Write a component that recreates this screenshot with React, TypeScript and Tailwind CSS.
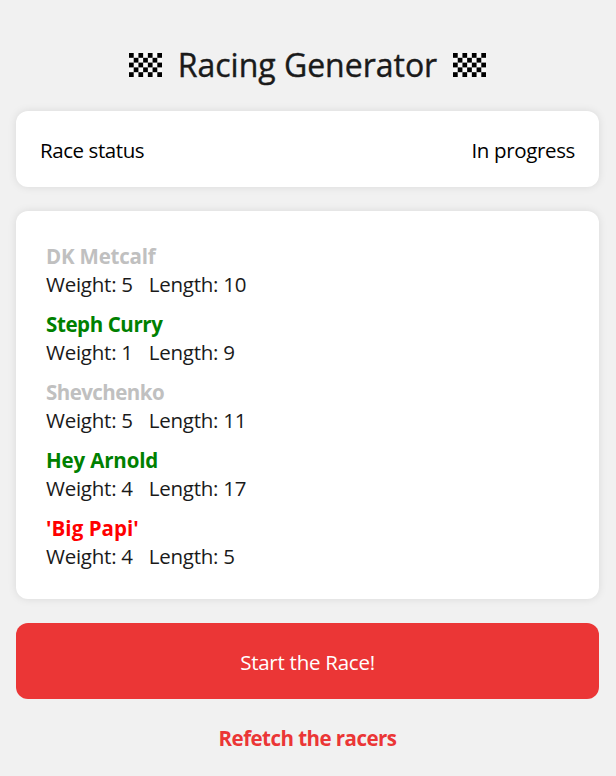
const racers = [
  { name: "DK Metcalf", weight: 5, length: 10, style: "text-[#c0c0c0] tracking-[-0.2px]" },
  { name: "Steph Curry", weight: 1, length: 9, style: "text-[#008000] tracking-[-0.4px]" },
  { name: "Shevchenko", weight: 5, length: 11, style: "text-[#c0c0c0] tracking-[-0.55px]" },
  { name: "Hey Arnold", weight: 4, length: 17, style: "text-[#008000] tracking-[-0.15px]" },
  { name: "'Big Papi'", weight: 4, length: 5, style: "text-[#ff0000] tracking-[0.05px]" },
];

function Flag() {
  return (
    <svg width="33" height="24" viewBox="0 0 33 24" className="block shrink-0" aria-hidden="true">
      <rect width="33" height="24" fill="#fafafa" />
      {Array.from({ length: 35 }, (_, i) => {
        const c = i % 7;
        const r = Math.floor(i / 7);
        return (c + r) % 2 === 0 ? (
          <rect key={i} x={c * 4.714} y={r * 4.8} width="4.714" height="4.8" />
        ) : null;
      })}
    </svg>
  );
}

export default function App() {
  return (
    <main className="flex h-[776px] flex-col bg-[#f1f1f1] pr-[17px] pl-4 pt-11 font-['Open_Sans','Noto_Sans',sans-serif] text-[20.5px] leading-7 tracking-[-0.25px] text-black">
      <h1 className="flex h-[42px] items-center justify-center gap-[15.5px] text-[32px] tracking-[-0.02px] text-[#1a1a1a] [-webkit-text-stroke:0.4px_#1a1a1a]">
        <Flag />
        <span>Racing Generator</span>
        <Flag />
      </h1>
      <section className="mt-[25px] flex h-[76px] items-center justify-between rounded-xl bg-white px-6 pt-0.5 shadow-[0_0_8px_rgba(0,0,0,0.1)]">
        <span className="tracking-[-0.42px]">Race status</span>
        <span className="tracking-[-0.35px]">In progress</span>
      </section>
      <section className="mt-6 flex h-[388px] flex-col gap-3 rounded-xl bg-white px-[30px] pt-[31px] shadow-[0_0_8px_rgba(0,0,0,0.1)]">
        {racers.map((r) => (
          <div key={r.name}>
            <p className={`font-bold ${r.style}`}>{r.name}</p>
            <p className="flex gap-4 text-[#1a1a1a]">
              <span>Weight: {r.weight}</span>
              <span>Length: {r.length}</span>
            </p>
          </div>
        ))}
      </section>
      <button className="mt-6 h-[76px] rounded-xl bg-[#eb3636] pt-0.5 text-white">Start the Race!</button>
      <button className="mt-[25px] h-7 self-center font-bold tracking-[-0.54px] text-[#eb3636]">Refetch the racers</button>
    </main>
  );
}
